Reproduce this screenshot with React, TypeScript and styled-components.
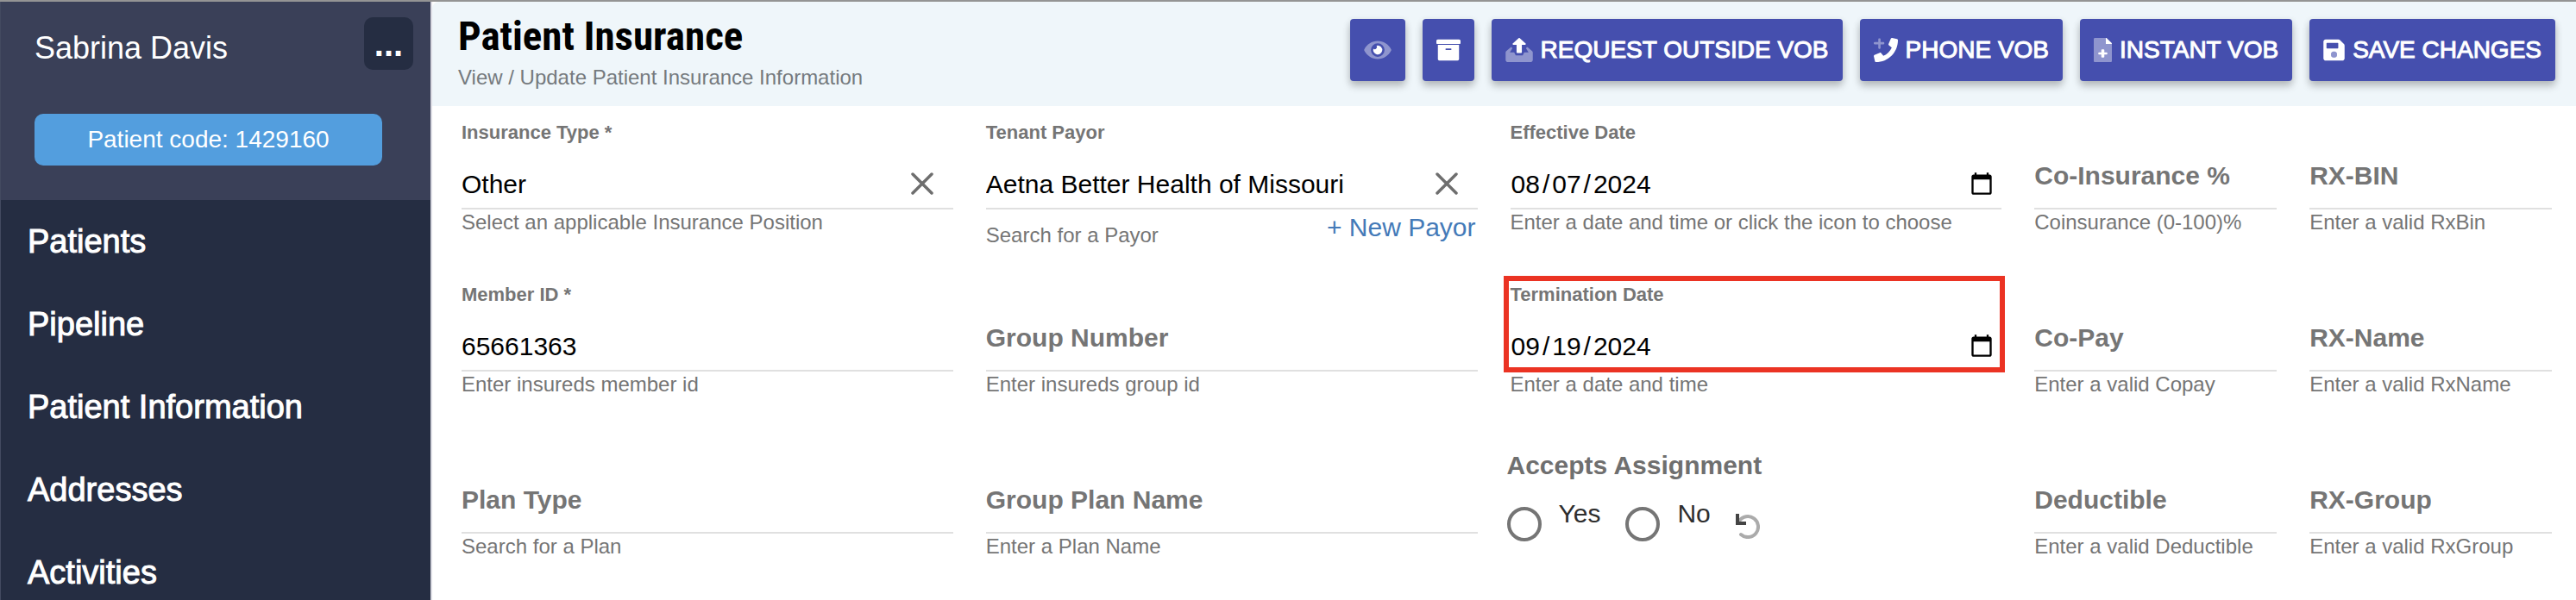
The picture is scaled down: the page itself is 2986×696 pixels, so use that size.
import React from "react";
import styled, { createGlobalStyle, css } from "styled-components";

const GlobalStyle = createGlobalStyle`
  *, *::before, *::after { box-sizing: border-box; }
  body {
    margin: 0;
    background: #ffffff;
    font-family: "Liberation Sans", Arial, sans-serif;
  }
  button, input { font: inherit; }
`;

const Shell = styled.div`
  display: flex;
  height: 100vh;
  overflow: hidden;
  border-top: 2px solid #949494;
`;

const Sidebar = styled.aside`
  flex: 0 0 501px;
  background: #252d42;
  border-left: 1px solid #434a60;
  border-right: 2px solid #dadae2;
  color: #ffffff;
`;

const Profile = styled.section`
  height: 230px;
  padding: 18px 20px 0 39px;
  background: #3a4058;
`;

const ProfileTop = styled.div`
  display: flex;
  justify-content: space-between;
  margin-bottom: 51px;
`;

const ProfileName = styled.div`
  padding-top: 14px;
  font-size: 36px;
  line-height: 44px;
`;

const MoreButton = styled.button`
  width: 57px;
  height: 61px;
  padding: 0;
  border: 0;
  border-radius: 10px;
  background: #252d42;
  color: #ffffff;
  font-size: 40px;
  font-weight: 700;
  line-height: 56px;
`;

const PatientCode = styled.div`
  margin-right: 36px;
  border-radius: 10px;
  background: #539ede;
  font-size: 28px;
  line-height: 60px;
  text-align: center;
`;

const Nav = styled.nav`
  display: flex;
  flex-direction: column;
`;

const NavLink = styled.a`
  padding-left: 31px;
  color: #ffffff;
  font-size: 38px;
  line-height: 96px;
  text-decoration: none;
  -webkit-text-stroke: 1px #ffffff;
`;

const Main = styled.main`
  flex: 1;
  min-width: 0;
`;

const PageHeader = styled.header`
  display: flex;
  justify-content: space-between;
  height: 121px;
  padding: 12px 24px 0 30px;
  background: #eff6fa;
  border-top-left-radius: 8px;
`;

const Title = styled.h1`
  margin: 0;
  font-family: "Roboto Condensed", Roboto, "Liberation Sans", sans-serif;
  font-size: 47px;
  font-weight: 700;
  line-height: 56px;
  color: #000000;
`;

const Subtitle = styled.p`
  margin: 4px 0 0;
  font-size: 24px;
  line-height: 32px;
  color: #757a7e;
`;

const Toolbar = styled.div`
  display: flex;
  gap: 20px;
  padding-top: 8px;
`;

const ToolButton = styled.button`
  display: flex;
  align-items: center;
  gap: 9px;
  height: 72px;
  padding: 0 16px;
  border: 0;
  border-radius: 4px;
  background: #454fae;
  color: #ffffff;
  font-size: 28px;
  white-space: nowrap;
  -webkit-text-stroke: 1px #ffffff;
  box-shadow: 0 6px 10px rgba(0, 0, 0, 0.2), 0 2px 8px rgba(0, 0, 0, 0.1);

  svg {
    display: block;
    height: 28px;
    fill: currentColor;
    -webkit-text-stroke: 0;
  }
`;

const Form = styled.form`
  display: grid;
  grid-template-columns: 2fr 2fr 2fr 1fr 1fr;
  grid-auto-rows: minmax(188px, auto);
  column-gap: 30px;
  padding: 17px 24px 0 30px;
`;

const FieldCell = styled.div`
  position: relative;
  min-width: 0;
  padding: 0 4px;
`;

const Control = styled.div`
  display: grid;
`;

const FieldLabel = styled.label<{ $floating: boolean }>`
  grid-area: 1 / 1;
  color: #757575;
  font-weight: 700;
  white-space: nowrap;
  pointer-events: none;
  z-index: 1;
  ${({ $floating }) =>
    $floating
      ? css`
          font-size: 22px;
          line-height: 28px;
        `
      : css`
          padding-top: 46px;
          font-size: 30px;
          line-height: 36px;
        `}
`;

const FieldInput = styled.input`
  grid-area: 1 / 1;
  width: 100%;
  height: 103px;
  padding: 46px 0 0;
  border: 0;
  border-bottom: 2px solid #e0e0e0;
  border-radius: 0;
  outline: 0;
  background: transparent;
  color: #000000;
  font-size: 30px;

  &[type="date"] {
    padding-right: 6px;
  }

  &::-webkit-datetime-edit-text {
    padding: 0 2px;
  }
`;

const ClearButton = styled.button`
  display: grid;
  place-items: center;
  grid-area: 1 / 1;
  align-self: end;
  justify-self: end;
  width: 48px;
  height: 48px;
  margin: 0 12px 6px 0;
  padding: 0;
  border: 0;
  background: transparent;
  z-index: 1;
`;

const HelperRow = styled.div`
  display: flex;
  justify-content: space-between;
`;

const Helper = styled.div<{ $lowered?: boolean }>`
  padding-top: ${({ $lowered }) => ($lowered ? "15px" : "0")};
  color: #757575;
  font-size: 24px;
  line-height: 30px;
  white-space: nowrap;
`;

const NewLink = styled.a`
  padding: 4px 2px 0 0;
  color: #447ab8;
  font-size: 30px;
  line-height: 34px;
  text-decoration: none;
`;

const Highlight = styled.div`
  position: absolute;
  inset: -8px 0 84px -4px;
  border: 6px solid #eb3323;
  pointer-events: none;
  z-index: 2;
`;

const ChoiceGroup = styled.fieldset`
  min-width: 0;
  margin: 0;
  padding: 0;
  border: 0;
`;

const Legend = styled.legend`
  padding: 6px 0 0;
  color: #6f6f6f;
  font-size: 30px;
  font-weight: 700;
  line-height: 36px;
`;

const Choices = styled.div`
  display: flex;
  gap: 29px;
  padding-top: 20px;
`;

const Choice = styled.label`
  display: flex;
  gap: 20px;
  color: #2e2e2e;
  font-size: 30px;
  line-height: 36px;
`;

const Radio = styled.input`
  appearance: none;
  width: 40px;
  height: 40px;
  margin: 10px 0 0;
  border: 4px solid #757575;
  border-radius: 50%;
`;

const UndoButton = styled.button`
  display: block;
  margin: 15px 0 0;
  padding: 0;
  border: 0;
  background: transparent;

  svg { display: block; }
`;

const EyeIcon = () => (
  <svg viewBox="0 0 576 512" width="32" aria-hidden="true">
    <path opacity="0.4" d="M572.52 241.4C518.29 135.59 410.93 64 288 64S57.68 135.64 3.48 241.41a32.35 32.35 0 0 0 0 29.19C57.71 376.41 165.07 448 288 448s230.32-71.64 284.52-177.41a32.35 32.35 0 0 0 0-29.19zM288 400a144 144 0 1 1 144-144 143.93 143.93 0 0 1-144 144z" />
    <path d="M380.66 280.87a95.78 95.78 0 1 1-184.87-50.18 47.85 47.85 0 0 0 66.9-66.9 95.3 95.3 0 0 1 118 117.08z" />
  </svg>
);

const ArchiveIcon = () => (
  <svg viewBox="0 0 512 512" width="28" aria-hidden="true">
    <path d="M32 448c0 17.7 14.3 32 32 32h384c17.7 0 32-14.3 32-32V144H32v304zm160-212c0-6.600 5.400-12 12-12h104c6.600 0 12 5.400 12 12v8c0 6.600-5.400 12-12 12H204c-6.600 0-12-5.400-12-12v-8zM480 32H32C14.300 32 0 46.300 0 64v48c0 8.800 7.200 16 16 16h480c8.800 0 16-7.200 16-16V64c0-17.700-14.300-32-32-32z" />
  </svg>
);

const UploadIcon = () => (
  <svg viewBox="0 0 576 512" width="32" aria-hidden="true">
    <path opacity="0.4" d="M567 283L476 204c-9-8-15-14-26-14 0 10-8 22-18 30l54 84H394l-32 64H214l-32-64H90l54-84c-10-8-18-20-18-30-11 0-17 6-26 14L9 283c-6 9-9 19-9 30v151c0 26 22 48 48 48h480c26 0 48-22 48-48V313c0-11-3-21-9-30z" />
    <path d="M248 320h80c9 0 16-7 16-16V144h70c14 0 21-17 11-27L299 5c-6-6-16-6-22 0L151 117c-10 10-3 27 11 27h70v160c0 9 7 16 16 16z" />
  </svg>
);

const PhonePlusIcon = () => (
  <svg viewBox="0 0 512 512" width="28" aria-hidden="true">
    <path opacity="0.4" d="M208 88h-64V24c0-9-7-16-16-16h-16c-9 0-16 7-16 16v64H16c-9 0-16 7-16 16v16c0 9 7 16 16 16h80v80c0 9 7 16 16 16h16c9 0 16-7 16-16v-80h64c9 0 16-7 16-16v-16c0-9-7-16-16-16z" />
    <path d="M493.400 24.600l-104-24c-11.300-2.600-22.900 3.300-27.500 13.900l-48 112c-4.200 9.800-1.400 21.300 6.900 28l60.600 49.600c-36 76.700-98.900 140.500-177.200 177.200l-49.600-60.600c-6.800-8.300-18.200-11.100-28-6.900l-112 48C3.900 366.500-2 378.100.6 389.400l24 104C27.100 504.200 36.700 512 48 512c256.100 0 464-207.500 464-464 0-11.200-7.700-20.900-18.600-23.400z" />
  </svg>
);

const FilePlusIcon = () => (
  <svg viewBox="0 0 384 512" width="21" aria-hidden="true">
    <path opacity="0.4" fillRule="evenodd" d="M384 128H272c-9 0-16-7-16-16V0H24C11 0 0 11 0 24v464c0 13 11 24 24 24h336c13 0 24-11 24-24z" />
    <path d="M377 105L279 7c-5-5-11-7-17-7h-6v128h128v-6c0-6-2-12-7-17zM272 304h-48v-48c0-9-7-16-16-16h-32c-9 0-16 7-16 16v48h-48c-9 0-16 7-16 16v16c0 9 7 16 16 16h48v48c0 9 7 16 16 16h32c9 0 16-7 16-16v-48h48c9 0 16-7 16-16v-16c0-9-7-16-16-16z" />
  </svg>
);

const SaveIcon = () => (
  <svg viewBox="0 0 448 512" width="25" aria-hidden="true">
    <path fillRule="evenodd" d="M434 130l-84-84a48 48 0 0 0-34-14H48C22 32 0 54 0 80v352c0 26 22 48 48 48h352c26 0 48-22 48-48V164c0-13-5-25-14-34zM76 104h226c7 0 12 5 12 12v96c0 7-5 12-12 12H76c-7 0-12-5-12-12v-96c0-7 5-12 12-12zM224 288a64 64 0 1 1 0 128 64 64 0 0 1 0-128z" />
    <circle opacity="0.4" cx="224" cy="352" r="64" />
  </svg>
);

const CloseIcon = () => (
  <svg width="26" height="26" viewBox="0 0 26 26" aria-hidden="true">
    <path d="M2 2L24 24M24 2L2 24" stroke="#6e6e6e" strokeWidth="3.500" strokeLinecap="round" />
  </svg>
);

const UndoIcon = () => (
  <svg width="28" height="29" viewBox="0 0 28 29" fill="none" aria-hidden="true">
    <path d="M4 8.500A12 12 0 1 1 6 24" stroke="#ababab" strokeWidth="4" strokeLinecap="round" />
    <path d="M2 0V11H12" stroke="#444444" strokeWidth="4" />
  </svg>
);

type FieldProps = {
  id: string;
  label: string;
  helper: string;
  value?: string;
  type?: "text" | "date";
  clearable?: boolean;
  link?: string;
  highlighted?: boolean;
};

function Field({ id, label, helper, value, type = "text", clearable, link, highlighted }: FieldProps) {
  return (
    <FieldCell>
      <Control>
        <FieldLabel htmlFor={id} $floating={Boolean(value)}>{label}</FieldLabel>
        <FieldInput id={id} type={type} defaultValue={value} />
        {clearable && (
          <ClearButton type="button" aria-label={`Clear ${label}`}>
            <CloseIcon />
          </ClearButton>
        )}
      </Control>
      <HelperRow>
        <Helper $lowered={Boolean(link)}>{helper}</Helper>
        {link && <NewLink href="#new-payor">{link}</NewLink>}
      </HelperRow>
      {highlighted && <Highlight />}
    </FieldCell>
  );
}

const navItems = ["Patients", "Pipeline", "Patient Information", "Addresses", "Activities"];

export default function App() {
  return (
    <>
      <GlobalStyle />
      <Shell>
        <Sidebar>
          <Profile>
            <ProfileTop>
              <ProfileName>Sabrina Davis</ProfileName>
              <MoreButton type="button">...</MoreButton>
            </ProfileTop>
            <PatientCode>Patient code: 1429160</PatientCode>
          </Profile>
          <Nav>
            {navItems.map((item) => (
              <NavLink key={item} href={`#${item.toLowerCase().replace(" ", "-")}`}>{item}</NavLink>
            ))}
          </Nav>
        </Sidebar>
        <Main>
          <PageHeader>
            <div>
              <Title>Patient Insurance</Title>
              <Subtitle>View / Update Patient Insurance Information</Subtitle>
            </div>
            <Toolbar>
              <ToolButton type="button" aria-label="Preview"><EyeIcon /></ToolButton>
              <ToolButton type="button" aria-label="Archive"><ArchiveIcon /></ToolButton>
              <ToolButton type="button"><UploadIcon />REQUEST OUTSIDE VOB</ToolButton>
              <ToolButton type="button"><PhonePlusIcon />PHONE VOB</ToolButton>
              <ToolButton type="button"><FilePlusIcon />INSTANT VOB</ToolButton>
              <ToolButton type="button"><SaveIcon />SAVE CHANGES</ToolButton>
            </Toolbar>
          </PageHeader>
          <Form>
            <Field id="insurance-type" label="Insurance Type *" value="Other" helper="Select an applicable Insurance Position" clearable />
            <Field id="tenant-payor" label="Tenant Payor" value="Aetna Better Health of Missouri" helper="Search for a Payor" clearable link="+ New Payor" />
            <Field id="effective-date" label="Effective Date" type="date" value="2024-08-07" helper="Enter a date and time or click the icon to choose" />
            <Field id="co-insurance" label="Co-Insurance %" helper="Coinsurance (0-100)%" />
            <Field id="rx-bin" label="RX-BIN" helper="Enter a valid RxBin" />

            <Field id="member-id" label="Member ID *" value="65661363" helper="Enter insureds member id" />
            <Field id="group-number" label="Group Number" helper="Enter insureds group id" />
            <Field id="termination-date" label="Termination Date" type="date" value="2024-09-19" helper="Enter a date and time" highlighted />
            <Field id="co-pay" label="Co-Pay" helper="Enter a valid Copay" />
            <Field id="rx-name" label="RX-Name" helper="Enter a valid RxName" />

            <Field id="plan-type" label="Plan Type" helper="Search for a Plan" />
            <Field id="group-plan-name" label="Group Plan Name" helper="Enter a Plan Name" />
            <ChoiceGroup>
              <Legend>Accepts Assignment</Legend>
              <Choices>
                <Choice><Radio type="radio" name="accepts" value="yes" />Yes</Choice>
                <Choice><Radio type="radio" name="accepts" value="no" />No</Choice>
                <UndoButton type="button" aria-label="Reset choice"><UndoIcon /></UndoButton>
              </Choices>
            </ChoiceGroup>
            <Field id="deductible" label="Deductible" helper="Enter a valid Deductible" />
            <Field id="rx-group" label="RX-Group" helper="Enter a valid RxGroup" />
          </Form>
        </Main>
      </Shell>
    </>
  );
}
